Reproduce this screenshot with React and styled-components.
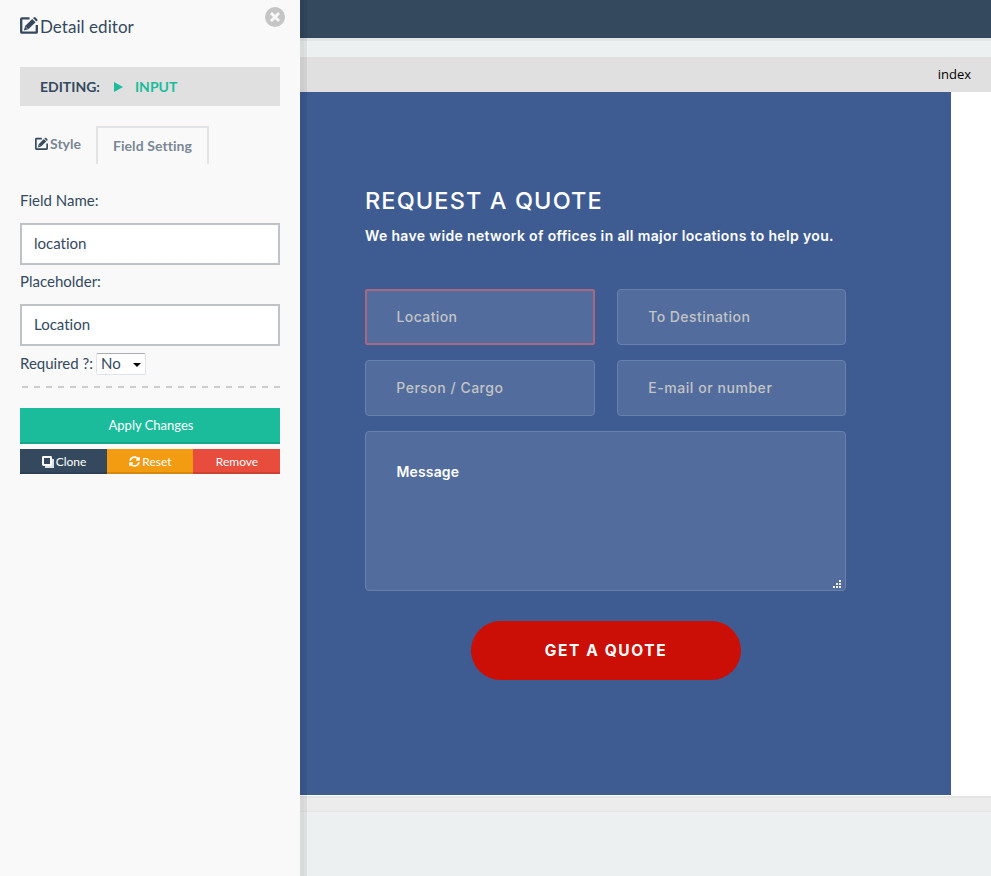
import React from 'react';
import styled, { createGlobalStyle } from 'styled-components';
import { FaSyncAlt } from 'react-icons/fa';

const GlobalStyle = createGlobalStyle`
  *, *::before, *::after { box-sizing: border-box; }
  body { margin: 0; background: #ecf0f1; }
  button, input, textarea { font-family: inherit; margin: 0; }
`;

const Page = styled.div`
  display: flex;
  height: 876px;
  overflow: hidden;
  color: #34495e;
  font-family: Lato, sans-serif;
  font-variant-ligatures: none;
`;

/* ---------- sidebar ---------- */

const Sidebar = styled.aside`
  position: relative;
  z-index: 1;
  flex: 0 0 300px;
  padding: 0 20px;
  background: #f9f9f9;
  box-shadow: 4px 0 0 rgba(0, 0, 0, 0.02), 7px 0 0 rgba(0, 0, 0, 0.065);
`;

const SidebarHeader = styled.header`
  display: flex;
  align-items: flex-start;
  height: 67px;
  padding-top: 16px;
`;

const Title = styled.h1`
  margin: 0 0 0 2px;
  font-size: 17px;
  line-height: 22px;
  font-weight: 400;
  letter-spacing: 0.05px;
`;

const CloseButton = styled.button`
  position: absolute;
  top: 7px;
  right: 15px;
  display: flex;
  width: 20px;
  height: 20px;
  padding: 0;
  border: 0;
  background: none;
`;

const EditingBar = styled.div`
  display: flex;
  align-items: center;
  height: 39px;
  padding: 0 20px;
  background: #e0e0e0;
  font-size: 14px;
  font-weight: 700;
`;

const Arrow = styled.span`
  margin: 0 12px 0 14px;
  border-left: 9px solid #1abc9c;
  border-top: 5px solid transparent;
  border-bottom: 5px solid transparent;
`;

const ElementName = styled.span`
  color: #1abc9c;
`;

const Tabs = styled.nav`
  display: flex;
  height: 58px;
  padding: 20px 0 0 14px;
`;

const Tab = styled.div`
  display: flex;
  align-items: center;
  justify-content: center;
  gap: 2px;
  width: ${(p) => (p.$active ? '113px' : '62px')};
  height: 38px;
  padding: ${(p) => (p.$active ? '0 0 2px' : '0 14px 3px 0')};
  border: solid #e0e4e7;
  border-width: ${(p) => (p.$active ? '2px 2px 0' : '0')};
  color: #798795;
  font-size: 14px;
  font-weight: 700;
  letter-spacing: ${(p) => (p.$active ? '0.08px' : '0')};
  white-space: nowrap;
`;

const Fields = styled.form`
  display: flex;
  flex-direction: column;
  padding-top: 25px;
  font-size: 15px;
`;

const Label = styled.label`
  height: ${(p) => p.$height}px;
  line-height: 22px;
`;

const TextInput = styled.input`
  height: 42px;
  margin-bottom: 5px;
  padding: 0 12px 2px;
  border: 2px solid #bdc3c7;
  border-radius: 0;
  background: #fff;
  color: #34495e;
  font-size: 15px;
  font-variant-ligatures: none;
  outline: none;
`;

const RequiredRow = styled.div`
  display: flex;
  align-items: center;
  gap: 3px;
  height: 24px;
  margin-top: 1px;
  line-height: 20px;
`;

const RequiredLabel = styled.span`
  padding-bottom: 2px;
`;

const Select = styled.div`
  display: flex;
  align-items: center;
  justify-content: space-between;
  width: 50px;
  height: 22px;
  padding: 0 4px;
  border: 1px solid #dfe3eb;
  border-top-color: #abadb3;
  border-radius: 2px;
  background: #fff;
  line-height: 18px;
`;

const SelectValue = styled.span`
  padding-bottom: 2px;
`;

const Caret = styled.span`
  margin-top: 2px;
  border-top: 4px solid #000;
  border-left: 4px solid transparent;
  border-right: 4px solid transparent;
`;

const Divider = styled.div`
  height: 2px;
  margin: 10px 0 20px;
  background: repeating-linear-gradient(90deg, transparent 0 2px, #cdcdcd 2px 8px, transparent 8px 12px);
`;

const ApplyButton = styled.button`
  height: 36px;
  padding: 0 0 0 2px;
  border: 0;
  border-bottom: 2px solid #18a589;
  background: #1abc9c;
  color: #fff;
  font-size: 13px;
`;

const ActionRow = styled.div`
  display: grid;
  grid-template-columns: 87px 86px 87px;
  margin-top: 5px;
`;

const ActionButton = styled.button`
  display: flex;
  align-items: center;
  justify-content: center;
  gap: 2px;
  height: 25px;
  padding: 2px 0 0 1px;
  border: 0;
  border-bottom: 2px solid ${(p) => p.$edge};
  background: ${(p) => p.$color};
  color: #fff;
  font-size: 12px;
`;

/* ---------- workspace ---------- */

const Workspace = styled.main`
  flex: 1;
  display: flex;
  flex-direction: column;
`;

const TopBar = styled.div`
  height: 41px;
  margin-bottom: 16px;
  background: #34495e;
  border-bottom: 3px solid #e3e5e6;
`;

const FileBar = styled.div`
  display: flex;
  align-items: center;
  justify-content: flex-end;
  height: 35px;
  padding: 0 20px 2px;
  background: #e0e0e0;
  color: #000;
  font: 13px 'Open Sans', sans-serif;
`;

const Canvas = styled.div`
  height: 704px;
  padding: 0 40px 1px 0;
  background: #fff;
`;

const CanvasFooter = styled.div`
  height: 16px;
  border-top: 2px solid #e5e5e5;
  border-bottom: 1px solid #e3e5e5;
  background: #ececec;
`;

const QuoteSection = styled.section`
  height: 703px;
  padding: 94px 105px 0 65px;
  background: #3e5c92;
  color: #fff;
  font-family: Inter, sans-serif;
`;

const Heading = styled.h2`
  margin: 0;
  font-size: 23.5px;
  line-height: 30px;
  font-weight: 500;
  letter-spacing: 1.12px;
  white-space: nowrap;
`;

const Lead = styled.p`
  margin: 9px 0 43px;
  font-size: 14px;
  line-height: 21px;
  font-weight: 600;
  letter-spacing: 0.345px;
  white-space: nowrap;
`;

const QuoteGrid = styled.div`
  display: grid;
  grid-template-columns: 230px 229px;
  gap: 15px 22px;
`;

const QuoteInput = styled.input`
  width: 100%;
  height: 56px;
  padding: 0 30px 2px;
  border: ${(p) => (p.$selected ? '2px solid #a9687f' : '1px solid #6880ac')};
  padding-left: ${(p) => (p.$selected ? '29.5px' : '30.3px')};
  border-radius: ${(p) => (p.$selected ? '2px' : '4px')};
  background: #526d9d;
  font-size: 14px;
  font-weight: 500;
  letter-spacing: ${(p) => p.$tracking}px;
  outline: none;
  &::placeholder { color: #c3c4c6; opacity: 1; }
`;

const MessageBox = styled.div`
  grid-column: 1 / -1;
  display: flex;
  flex-direction: column;
  justify-content: space-between;
  height: 160px;
  padding: 30px 3px 1px 30.5px;
  border: 1px solid #6880ac;
  border-radius: 4px;
  background: #526d9d;
  font-size: 14px;
  line-height: 20px;
  font-weight: 600;
  letter-spacing: 0.15px;
`;

const SubmitButton = styled.button`
  display: block;
  width: 270px;
  height: 59px;
  margin: 30px 0 0 106px;
  padding: 0;
  border: 0;
  border-radius: 30px;
  background: #cb0f06;
  color: #fff;
  font-size: 15.5px;
  font-weight: 700;
  letter-spacing: 1.6px;
`;

const GripIcon = styled.svg`
  align-self: flex-end;
  display: block;
`;

function EditIcon({ size }) {
  return (
    <svg width={size} height={size} viewBox="0 0 18 18">
      <path d="M9.5 2.3H1.9a.7.7 0 0 0-.7.7v13a.7.7 0 0 0 .7.7h14.2a.7.7 0 0 0 .7-.7V9" fill="none" stroke="#34495e" strokeWidth="2.3" />
      <path d="M3.9 14.4l1.2-4.4 7.1-7.1 3.4 3.4-7.3 7zM13 2.1l1-.9q.6-.5 1.2 0l2.2 2.2q.5.6 0 1.2l-1 .9z" fill="#34495e" />
      <path d="M5.5 10.9l2 2" stroke="#f9f9f9" strokeWidth=".6" />
    </svg>
  );
}

function CloneIcon() {
  return (
    <svg width="12" height="12" viewBox="0 0 12 12">
      <path d="M3 3h9v9H3z" fill="#dfe2e5" />
      <rect x="1" y="1" width="8" height="8" rx=".4" fill="#34495e" stroke="#fff" strokeWidth="2" />
    </svg>
  );
}

function CloseIcon() {
  return (
    <svg width="20" height="20" viewBox="0 0 20 20">
      <circle cx="10" cy="10" r="10" fill="#c5c5c5" />
      <path d="M6 6l8 8M14 6l-8 8" stroke="#f9f9f9" strokeWidth="2.9" />
    </svg>
  );
}

function ResizeGrip() {
  return (
    <GripIcon width="9" height="9" viewBox="0 0 9 9" fill="#efefe8" shapeRendering="crispEdges">
      <path d="M6 0h2v2H6zM3 3h2v2H3zM6 3h2v2H6zM0 6h2v2H0zM3 6h2v2H3zM6 6h2v2H6z" />
    </GripIcon>
  );
}

const quoteFields = [
  { text: 'Location', tracking: 0.4, selected: true },
  { text: 'To Destination', tracking: 0.43 },
  { text: 'Person / Cargo', tracking: 0.5 },
  { text: 'E-mail or number', tracking: 0.55 },
];

export default function App() {
  return (
    <Page>
      <GlobalStyle />
      <Sidebar>
        <SidebarHeader>
          <EditIcon size={18} />
          <Title>Detail editor</Title>
          <CloseButton aria-label="Close"><CloseIcon /></CloseButton>
        </SidebarHeader>
        <EditingBar>
          EDITING:<Arrow /><ElementName>INPUT</ElementName>
        </EditingBar>
        <Tabs>
          <Tab><EditIcon size={13} />Style</Tab>
          <Tab $active>Field Setting</Tab>
        </Tabs>
        <Fields>
          <Label $height={34}>Field Name:</Label>
          <TextInput defaultValue="location" />
          <Label $height={34}>Placeholder:</Label>
          <TextInput defaultValue="Location" />
          <RequiredRow>
            <RequiredLabel>Required ?:</RequiredLabel>
            <Select><SelectValue>No</SelectValue><Caret /></Select>
          </RequiredRow>
          <Divider />
          <ApplyButton type="button">Apply Changes</ApplyButton>
          <ActionRow>
            <ActionButton type="button" $color="#34495e" $edge="#2e4053"><CloneIcon />Clone</ActionButton>
            <ActionButton type="button" $color="#f39c12" $edge="#d68910"><FaSyncAlt size={11} />Reset</ActionButton>
            <ActionButton type="button" $color="#e74c3c" $edge="#cb4335">Remove</ActionButton>
          </ActionRow>
        </Fields>
      </Sidebar>
      <Workspace>
        <TopBar />
        <FileBar>index</FileBar>
        <Canvas>
          <QuoteSection>
            <Heading>REQUEST A QUOTE</Heading>
            <Lead>We have wide network of offices in all major locations to help you.</Lead>
            <QuoteGrid>
              {quoteFields.map((f) => (
                <QuoteInput key={f.text} placeholder={f.text} $tracking={f.tracking} $selected={f.selected} />
              ))}
              <MessageBox>
                Message
                <ResizeGrip />
              </MessageBox>
            </QuoteGrid>
            <SubmitButton type="button">GET A QUOTE</SubmitButton>
          </QuoteSection>
        </Canvas>
        <CanvasFooter />
      </Workspace>
    </Page>
  );
}
